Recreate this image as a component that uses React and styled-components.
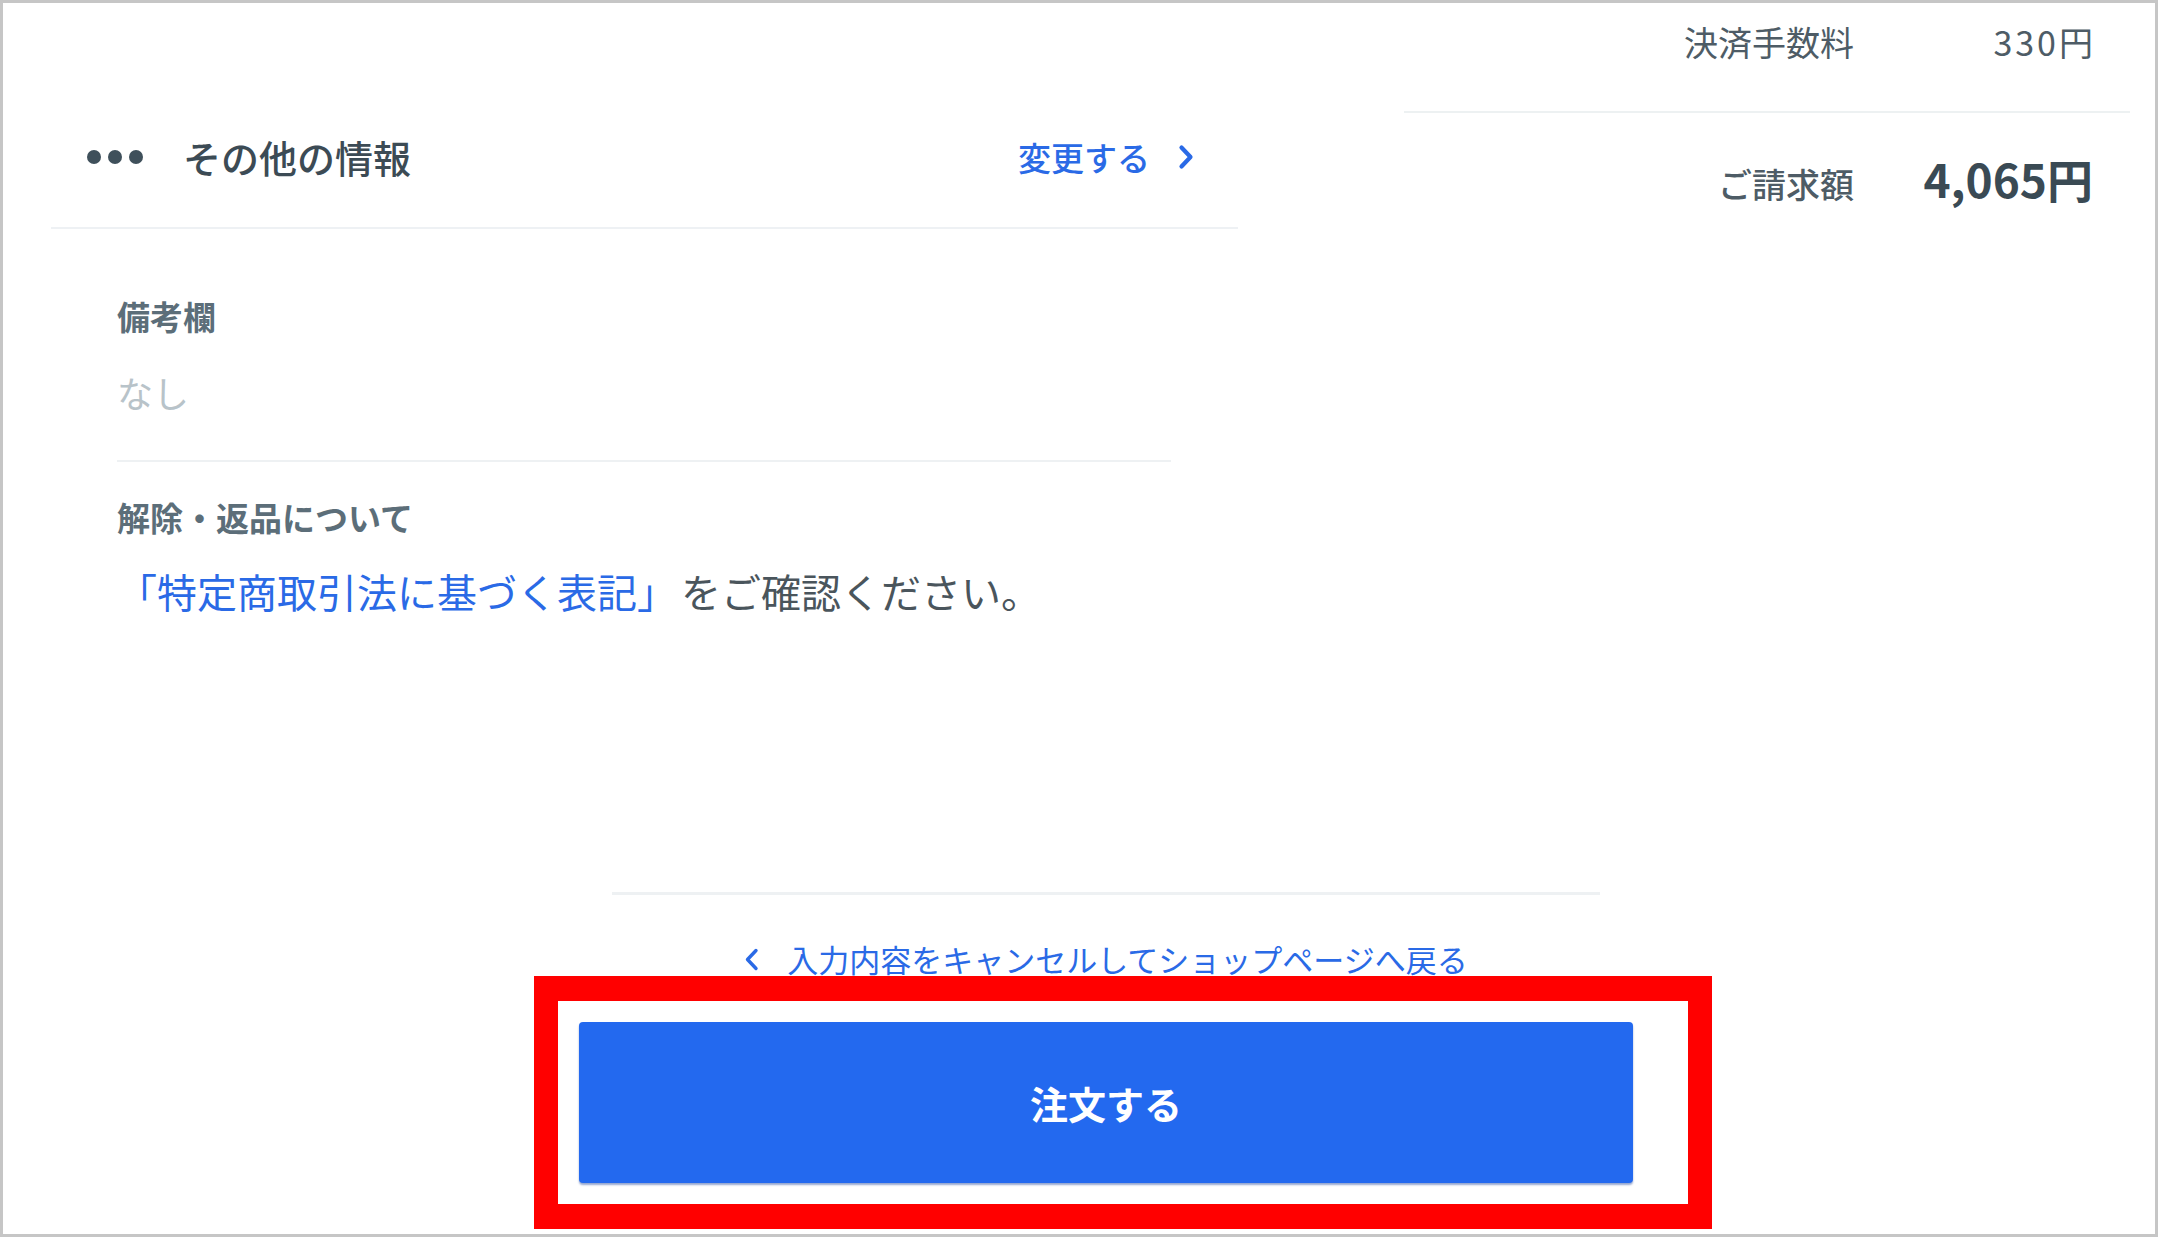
import React from 'react'
import styled, { createGlobalStyle } from 'styled-components'

const GlobalStyle = createGlobalStyle`
  body {
    margin: 0;
    background: #fff;
    font-family: "Noto Sans CJK JP", "Noto Sans", sans-serif;
  }
`

const Frame = styled.div`
  width: 2158px;
  height: 1237px;
  box-sizing: border-box;
  border: 3px solid #c6c6c6;
  background: #fff;
  display: flex;
  flex-direction: column;
`

const Top = styled.div`
  display: grid;
  grid-template-columns: 1187px 726px;
  column-gap: 166px;
  padding-left: 48px;
  align-items: start;
`

const Section = styled.section`
  display: flex;
  flex-direction: column;
`

const SectionHeader = styled.div`
  display: flex;
  align-items: center;
  justify-content: space-between;
  padding: 129px 44px 45px 36px;
  line-height: 50px;
  border-bottom: 2px solid #eef1f4;
`

const HeaderTitle = styled.h2`
  margin: 0;
  display: flex;
  align-items: center;
  gap: 40px;
  font-size: 38px;
  font-weight: 500;
  color: #3c4b55;
`

const EditLink = styled.a`
  display: flex;
  align-items: center;
  gap: 28px;
  font-size: 33px;
  font-weight: 500;
  color: #2a6ae6;
  text-decoration: none;
`

const SectionBody = styled.div`
  padding: 0 67px 0 66px;
`

const Field = styled.div`
  padding-top: ${p => p.$top}px;
  padding-bottom: ${p => (p.$divided ? 43 : 0)}px;
  border-bottom: ${p => (p.$divided ? '2px solid #eef1f3' : 'none')};
`

const FieldLabel = styled.div`
  font-size: 33px;
  line-height: 44px;
  font-weight: 700;
  color: #5c6e79;
`

const FieldValue = styled.div`
  margin-top: ${p => p.$gap}px;
  font-size: ${p => p.$size}px;
  line-height: ${p => p.$lh}px;
  color: ${p => (p.$empty ? '#b8c3c9' : '#4a555c')};
`

const BlueLink = styled.a`
  margin-right: 4px;
  color: #2a6ae6;
  text-decoration: none;
`

const Summary = styled.div`
  display: flex;
  flex-direction: column;
`

const SummaryRow = styled.div`
  display: grid;
  grid-template-columns: 1fr 239px;
  align-items: baseline;
  padding: ${p => (p.$total ? '37px 37px 0 0' : '19px 37px 49px 0')};
  border-bottom: ${p => (p.$total ? 'none' : '2px solid #edf1f2')};
  line-height: ${p => (p.$total ? 56 : 40)}px;
`

const SummaryLabel = styled.span`
  justify-self: end;
  font-size: 34px;
  font-weight: ${p => (p.$total ? 500 : 400)};
  color: #4e5c66;
`

const SummaryValue = styled.span`
  justify-self: end;
  font-size: ${p => (p.$total ? 46 : 34)}px;
  font-weight: ${p => (p.$total ? 700 : 400)};
  letter-spacing: ${p => (p.$total ? 0 : 3)}px;
  margin-right: ${p => (p.$total ? 0 : -3)}px;
  color: ${p => (p.$total ? '#3a4a54' : '#4e5c66')};
`

const Footer = styled.div`
  margin-top: auto;
  margin-left: 576px;
  width: 1054px;
  padding-bottom: 5px;
  display: flex;
  flex-direction: column;
`

const FooterRule = styled.div`
  height: 3px;
  margin: 0 33px;
  background: #eef1f3;
`

const BackLink = styled.a`
  margin-top: 44px;
  display: flex;
  align-items: center;
  justify-content: center;
  gap: 28px;
  font-size: 31px;
  line-height: 40px;
  color: #2a6ae6;
  text-decoration: none;
`

const Highlight = styled.div`
  position: relative;
  margin: -3px -79px 0 -45px;
  border: solid #ff0000;
  border-width: 25px 24px;
  padding: 21px 55px 21px 21px;
  background: #fff;
`

const OrderButton = styled.button`
  display: block;
  width: 100%;
  height: 161px;
  border: none;
  border-radius: 4px;
  background: #2369ef;
  box-shadow: 0 2px 2px rgba(20, 60, 150, 0.45);
  color: #fff;
  font-family: inherit;
  font-size: 38px;
  font-weight: 700;
  cursor: pointer;
`

const Dots = () => (
  <svg width="56" height="14" viewBox="0 0 56 14">
    <circle cx="7" cy="7" r="7" fill="#3f505b" />
    <circle cx="28" cy="7" r="7" fill="#3f505b" />
    <circle cx="49" cy="7" r="7" fill="#3f505b" />
  </svg>
)

const ChevronRight = () => (
  <svg width="16" height="26" viewBox="0 0 16 26">
    <path d="M3.5 3.5 L12.5 13 L3.5 22.5" fill="none" stroke="#2a6ae6" strokeWidth="4.2" strokeLinecap="round" strokeLinejoin="round" />
  </svg>
)

const ChevronLeft = () => (
  <svg width="15" height="23" viewBox="0 0 15 23">
    <path d="M12 2.5 L3.5 11.5 L12 20.5" fill="none" stroke="#2a6ae6" strokeWidth="3.4" strokeLinecap="round" strokeLinejoin="round" />
  </svg>
)

function App() {
  return (
    <Frame>
      <GlobalStyle />
      <Top>
        <Section>
          <SectionHeader>
            <HeaderTitle>
              <Dots />
              その他の情報
            </HeaderTitle>
            <EditLink href="#">
              変更する
              <ChevronRight />
            </EditLink>
          </SectionHeader>
          <SectionBody>
            <Field $top={65} $divided>
              <FieldLabel>備考欄</FieldLabel>
              <FieldValue $gap={29} $size={36} $lh={50} $empty>なし</FieldValue>
            </Field>
            <Field $top={33}>
              <FieldLabel>解除・返品について</FieldLabel>
              <FieldValue $gap={25} $size={40} $lh={54}>
                <BlueLink href="#">「特定商取引法に基づく表記」</BlueLink>をご確認ください。
              </FieldValue>
            </Field>
          </SectionBody>
        </Section>

        <Summary>
          <SummaryRow>
            <SummaryLabel>決済手数料</SummaryLabel>
            <SummaryValue>330円</SummaryValue>
          </SummaryRow>
          <SummaryRow $total>
            <SummaryLabel $total>ご請求額</SummaryLabel>
            <SummaryValue $total>4,065円</SummaryValue>
          </SummaryRow>
        </Summary>
      </Top>

      <Footer>
        <FooterRule />
        <BackLink href="#">
          <ChevronLeft />
          入力内容をキャンセルしてショップページへ戻る
        </BackLink>
        <Highlight>
          <OrderButton type="button">注文する</OrderButton>
        </Highlight>
      </Footer>
    </Frame>
  )
}

export default App
